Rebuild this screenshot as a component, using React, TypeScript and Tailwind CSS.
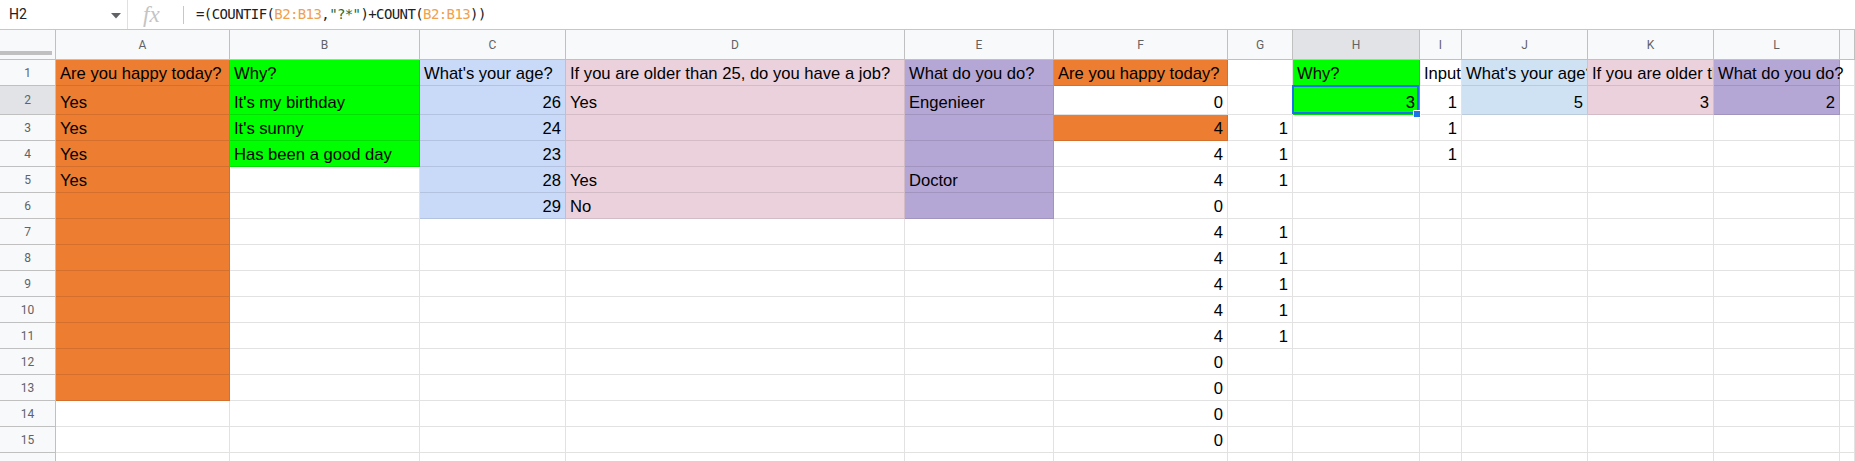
import React from "react";

type Cell = { t?: string; c?: string; r?: boolean; clip?: boolean; sel?: boolean };

const COL: Record<string, string> = {
  o: "bg-[#ed7d31] border-[#d4702c]",
  g: "bg-[#00ff00] border-[#00e000]",
  b: "bg-[#c9daf8] border-[#b3c3df]",
  p: "bg-[#ead1dc] border-[#d3bcc6]",
  u: "bg-[#b4a7d6] border-[#a195c0]",
  l: "bg-[#cfe2f3] border-[#bacbdb]",
  w: "bg-white border-[#e2e2e3]",
  n: "border-[#e2e2e3]",
};

const LETTERS = ["A", "B", "C", "D", "E", "F", "G", "H", "I", "J", "K", "L", ""];

function row(cells: Cell[]): Cell[] {
  const out: Cell[] = [];
  for (let i = 0; i < 13; i++) {
    out.push(cells[i] ?? { c: i === 12 ? "n" : "w" });
  }
  return out;
}

const E: Cell = { c: "w" };

const DATA: Cell[][] = [
  row([
    { t: "Are you happy today?", c: "o" },
    { t: "Why?", c: "g" },
    { t: "What's your age?", c: "b" },
    { t: "If you are older than 25, do you have a job?", c: "p" },
    { t: "What do you do?", c: "u" },
    { t: "Are you happy today?", c: "o" },
    E,
    { t: "Why?", c: "g" },
    { t: "Input", c: "w", clip: true },
    { t: "What's your age?", c: "l", clip: true },
    { t: "If you are older than 25, do you have a job?", c: "p", clip: true },
    { t: "What do you do?", c: "u" },
  ]),
  row([
    { t: "Yes", c: "o" },
    { t: "It's my birthday", c: "g" },
    { t: "26", c: "b", r: true },
    { t: "Yes", c: "p" },
    { t: "Engenieer", c: "u" },
    { t: "0", c: "w", r: true },
    E,
    { t: "3", c: "g", r: true, sel: true },
    { t: "1", c: "w", r: true },
    { t: "5", c: "l", r: true },
    { t: "3", c: "p", r: true },
    { t: "2", c: "u", r: true },
  ]),
  row([
    { t: "Yes", c: "o" },
    { t: "It's sunny", c: "g" },
    { t: "24", c: "b", r: true },
    { c: "p" },
    { c: "u" },
    { t: "4", c: "o", r: true },
    { t: "1", c: "w", r: true },
    E,
    { t: "1", c: "w", r: true },
  ]),
  row([
    { t: "Yes", c: "o" },
    { t: "Has been a good day", c: "g" },
    { t: "23", c: "b", r: true },
    { c: "p" },
    { c: "u" },
    { t: "4", c: "w", r: true },
    { t: "1", c: "w", r: true },
    E,
    { t: "1", c: "w", r: true },
  ]),
  row([
    { t: "Yes", c: "o" },
    E,
    { t: "28", c: "b", r: true },
    { t: "Yes", c: "p" },
    { t: "Doctor", c: "u" },
    { t: "4", c: "w", r: true },
    { t: "1", c: "w", r: true },
  ]),
  row([
    { c: "o" },
    E,
    { t: "29", c: "b", r: true },
    { t: "No", c: "p" },
    { c: "u" },
    { t: "0", c: "w", r: true },
  ]),
  ...[7, 8, 9, 10, 11].map(() =>
    row([{ c: "o" }, E, E, E, E, { t: "4", c: "w", r: true }, { t: "1", c: "w", r: true }])
  ),
  ...[12, 13].map(() => row([{ c: "o" }, E, E, E, E, { t: "0", c: "w", r: true }])),
  ...[14, 15].map(() => row([E, E, E, E, E, { t: "0", c: "w", r: true }])),
  row([]),
];

function FormulaBar() {
  return (
    <div className="flex h-[30px] items-center border-b border-[#c7c7c7] bg-white">
      <div className="relative flex h-full w-[128px] shrink-0 items-center border-r border-[#e0e0e0] pl-[9px]">
        <span className="text-[14px] text-[#202124] [font-family:Roboto,'Liberation_Sans',sans-serif]">
          H2
        </span>
        <svg className="absolute left-[111px] top-[13px]" width="10" height="6" viewBox="0 0 10 6">
          <path d="M0 0 L10 0 L5 5.5 Z" fill="#5f6368" />
        </svg>
      </div>
      <div className="flex h-full w-[55px] shrink-0 items-center pl-[15px]">
        <span className="text-[23px] italic leading-none text-[#c4c4c4] [font-family:'Liberation_Serif',serif]">
          fx
        </span>
      </div>
      <div className="h-[18px] w-px shrink-0 bg-[#c7c7c7]" />
      <div className="pl-[12px] text-[14px] tracking-[-0.6px] text-[#202124] whitespace-pre [font-family:'DejaVu_Sans_Mono',monospace]">
        <span>=(COUNTIF(</span>
        <span className="text-[#f0a14d]">B2:B13</span>
        <span>,</span>
        <span className="text-[#1e6b35]">"?*"</span>
        <span>)+COUNT(</span>
        <span className="text-[#f0a14d]">B2:B13</span>
        <span>))</span>
      </div>
    </div>
  );
}

export default function App() {
  return (
    <div className="h-[461px] w-full overflow-hidden bg-white [font-family:'Liberation_Sans',Arial,sans-serif]">
      <FormulaBar />
      <div className="grid grid-cols-[56px_174px_190px_146px_339px_149px_174px_65px_127px_42px_126px_126px_126px_1fr] grid-rows-[30px_26px_29px_repeat(14,26px)]">
        <div className="flex flex-col border-r border-b border-[#c0c0c0] bg-[#f8f9fa]">
          <div className="mt-auto mb-[4px] h-[4px] w-[52px] bg-[#c0c0c0]" />
        </div>
        {LETTERS.map((l, i) => (
          <div
            key={"h" + i}
            className={`flex items-center justify-center border-r border-b border-[#c0c0c0] text-[12px] text-[#5f6368] [font-family:Roboto,'Liberation_Sans',sans-serif] ${
              l === "H" ? "bg-[#e1e3e6]" : "bg-[#f8f9fa]"
            }`}
          >
            {l}
          </div>
        ))}
        {DATA.map((cells, ri) => (
          <React.Fragment key={"r" + ri}>
            <div
              className={`flex items-center justify-center border-r border-b border-[#c0c0c0] text-[12px] text-[#5f6368] [font-family:Roboto,'Liberation_Sans',sans-serif] ${
                ri === 1 ? "bg-[#e1e3e6]" : "bg-[#f8f9fa]"
              }`}
            >
              {ri + 1}
            </div>
            {cells.map((cell, ci) => (
              <div
                key={ci}
                className={`relative flex items-end whitespace-nowrap border-r border-b px-[4px] pb-[2px] text-[16.6px] leading-[19px] text-black ${
                  COL[cell.c ?? "w"]
                } ${cell.r ? "justify-end" : ""} ${cell.clip ? "overflow-hidden" : ""} ${
                  cell.sel ? "z-10" : ""
                }`}
              >
                {cell.t ? <span>{cell.t}</span> : null}
                {cell.sel ? (
                  <>
                    <div className="pointer-events-none absolute left-[-1px] top-[-1px] right-0 bottom-0 border-2 border-[#1a73e8]" />
                    <div className="absolute right-[-2px] bottom-[-4px] h-[8px] w-[8px] border border-white bg-[#1a73e8]" />
                  </>
                ) : null}
              </div>
            ))}
          </React.Fragment>
        ))}
      </div>
    </div>
  );
}
